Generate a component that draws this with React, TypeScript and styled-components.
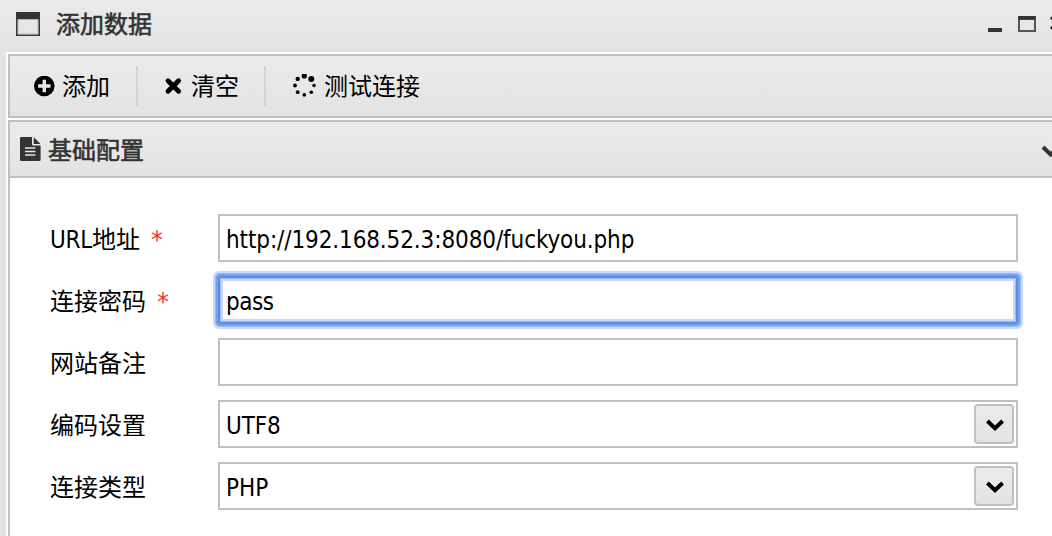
import React from 'react';
import styled, { createGlobalStyle, css } from 'styled-components';

const GlobalStyle = createGlobalStyle`
  * { box-sizing: border-box; }
  html, body { margin: 0; padding: 0; overflow: hidden; }
  body {
    background: #fff;
    color: #000;
    font: 24px "DejaVu Sans Condensed", "Noto Sans CJK SC", sans-serif;
  }
`;

const raised = css`
  background: linear-gradient(#ebebeb, #e3e3e3);
`;

const Window = styled.div`
  width: 1052px;
  height: 536px;
  overflow: hidden;
  display: flex;
  flex-direction: column;
  background: #e3e3e3;
`;

const TitleBar = styled.header`
  ${raised}
  flex: none;
  height: 52px;
  padding-left: 16px;
  display: flex;
  align-items: center;
  color: #333;
`;

const Title = styled.h1`
  margin: -6px 0 0 16px;
  font: 400 24px/36px "Noto Sans CJK SC", sans-serif;
  -webkit-text-stroke: 0.6px #333;
`;

const WindowIcon = styled.svg`
  display: block;
  width: 24px;
  height: 24px;
  margin-top: -4px;
`;

const WindowControls = styled.svg`
  display: block;
  width: 72px;
  height: 52px;
  margin-left: auto;
`;

const Body = styled.main`
  flex: 1;
  min-height: 0;
  margin-left: 6px;
  padding: 2px 0 0 2px;
  background: #fff;
  display: flex;
  flex-direction: column;
  gap: 2px;
`;

const Toolbar = styled.nav`
  ${raised}
  flex: none;
  height: 64px;
  border: 2px solid #c0c0c0;
  border-right: 0;
  display: flex;
  align-items: center;
`;

const ToolButton = styled.button<{ $width: number; $inset: number }>`
  width: ${p => p.$width}px;
  height: 40px;
  padding: 0 0 0 ${p => p.$inset}px;
  border: 0;
  background: none;
  display: flex;
  align-items: center;
  font: 24px/36px "Noto Sans CJK SC", sans-serif;
  color: #000;
  white-space: nowrap;

  & + & { border-left: 2px solid #c8d8dc; }
`;

const ToolText = styled.span`
  padding-bottom: 2px;
`;

const ToolIcon = styled.svg<{ $size: number; $gap: number }>`
  flex: none;
  width: ${p => p.$size}px;
  height: ${p => p.$size}px;
  margin-right: ${p => p.$gap}px;
`;

const Panel = styled.section`
  flex: 1;
  border: 2px solid #c0c0c0;
  border-width: 2px 0 0 2px;
`;

const PanelHeader = styled.header`
  ${raised}
  height: 56px;
  border-bottom: 2px solid #c0c0c0;
  padding-left: 10px;
  display: flex;
  align-items: center;
  color: #333;
`;

const PanelTitle = styled.h2`
  margin: 0 0 1px 7px;
  font: 400 24px/36px "Noto Sans CJK SC", sans-serif;
  -webkit-text-stroke: 0.6px #333;
`;

const FileIcon = styled.svg`
  width: 21px;
  height: 24px;
`;

const Collapse = styled.svg`
  width: 12px;
  height: 20px;
  margin: 6px 0 0 auto;
`;

const Form = styled.form`
  padding: 36px 34px 0 40px;
  display: flex;
  flex-direction: column;
  gap: 14px;
`;

const Row = styled.div`
  display: flex;
  height: 48px;
`;

const Label = styled.label`
  flex: none;
  width: 168px;
  line-height: 53px;
  white-space: pre;
`;

const Latin = styled.span<{ $spacing: number }>`
  letter-spacing: ${p => p.$spacing}px;
`;

const Required = styled.span`
  margin-left: 11px;
  color: #f0372b;
  font-family: "DejaVu Sans", sans-serif;
`;

const Field = styled.div<{ $focused?: boolean }>`
  flex: 1;
  border: 2px solid #c0c0c0;
  padding: 0 2px 0 6px;
  display: flex;
  align-items: center;
  justify-content: space-between;
  line-height: 46px;
  white-space: nowrap;

  ${p => p.$focused && css`
    border-color: #5f8cdf;
    border-radius: 2px;
    box-shadow: 0 0 0 2px #73a0f3, 0 0 0 3px #9bbcf3, 0 0 0 5px #c8d8f8,
      inset 0 0 0 1px #9bbcf3, inset 0 0 0 3px #c8d8f8;
  `}
`;

const FieldValue = styled(Latin)`
  padding-top: 4px;
`;

const DropButton = styled.button`
  ${raised}
  width: 40px;
  height: 40px;
  padding: 0 0 0 2px;
  border: 2px solid #c0c0c0;
  border-radius: 4px;
  display: grid;
  place-items: center;
`;

type RowData = {
  label: React.ReactNode;
  required?: boolean;
  value: string;
  spacing: number;
  focused?: boolean;
  select?: boolean;
};

const rows: RowData[] = [
  { label: <><Latin $spacing={-0.3}>URL</Latin>地址</>, required: true, value: 'http://192.168.52.3:8080/fuckyou.php', spacing: -0.11 },
  { label: '连接密码', required: true, value: 'pass', spacing: -0.5, focused: true },
  { label: '网站备注', value: '', spacing: 0 },
  { label: '编码设置', value: 'UTF8', spacing: -0.1, select: true },
  { label: '连接类型', value: 'PHP', spacing: 0, select: true },
];

const spinnerDots = [
  [12.3, 2.7, 2.6], [19.3, 5.7, 3], [22, 12.3, 1.8], [19.3, 19, 1.8],
  [12.3, 21.7, 1.8], [5.7, 19, 1.9], [3, 12.3, 1.9], [5.7, 5.7, 2.2],
];

export default function App() {
  return (
    <>
      <GlobalStyle />
      <Window>
        <TitleBar>
          <WindowIcon viewBox="0 0 24 24">
            <path fill="#333" fillRule="evenodd" d="M0 0h24v24H0zM1.6 7.2v15.2h20.8V7.2z" />
            <path fill="none" stroke="#aaa" strokeWidth=".8" d="M2 7.6h20v14.4H2z" />
          </WindowIcon>
          <Title>添加数据</Title>
          <WindowControls viewBox="980 0 72 52" fill="#333">
            <path d="M988 28h14v4h-14z" />
            <path fill="#555" fillRule="evenodd" d="M1018 16h18v16h-18zM1020 20v10h14V20z" />
            <path d="M1018.5 16h17v3.5h-17z" />
            <path d="M1051 17l12 12M1063 17l-12 12" fill="none" stroke="#333" strokeWidth="3.5" />
          </WindowControls>
        </TitleBar>
        <Body>
          <Toolbar>
            <ToolButton $width={126} $inset={24}>
              <ToolIcon $size={21} $gap={7} viewBox="0 0 21 21">
                <circle cx="10.3" cy="10" r="10.3" />
                <path d="M10.3 3.8v12.4M4.1 10h12.4" stroke="#e8e8e8" strokeWidth="3.4" />
              </ToolIcon>
              <ToolText>添加</ToolText>
            </ToolButton>
            <ToolButton $width={128} $inset={26}>
              <ToolIcon $size={18} $gap={9} viewBox="0 0 18 18">
                <path d="M4 3.7l10.6 10.6M14.6 3.7L4 14.3" stroke="#000" strokeWidth="4.8" strokeLinecap="round" />
              </ToolIcon>
              <ToolText>清空</ToolText>
            </ToolButton>
            <ToolButton $width={180} $inset={26}>
              <ToolIcon $size={24} $gap={8} viewBox="0 0 24 24">
                {spinnerDots.map(([x, y, r]) => <circle key={`${x}-${y}`} cx={x} cy={y - 0.8} r={r} />)}
              </ToolIcon>
              <ToolText>测试连接</ToolText>
            </ToolButton>
          </Toolbar>
          <Panel>
            <PanelHeader>
              <FileIcon viewBox="0 0 21 24">
                <path fill="#333" d="M1.3 0H12v7.3q0 1.3 1.3 1.3h7.3v14.1q0 1.3-1.3 1.3h-18Q0 24 0 22.7V1.3Q0 0 1.3 0zM13.7.4q.5.2.9.6l5 5q.4.4.6.9h-6.5z" />
                <path d="M5 11.1h10.4M5 14.6h10.4M5 18h10.4" stroke="#e6e6e6" strokeWidth="1.5" />
              </FileIcon>
              <PanelTitle>基础配置</PanelTitle>
              <Collapse viewBox="0 0 12 20">
                <path d="M3 5l7.5 7.5L18 5" fill="none" stroke="#333" strokeWidth="4" />
              </Collapse>
            </PanelHeader>
            <Form>
              {rows.map((row, i) => (
                <Row key={i}>
                  <Label>{row.label}{row.required && <Required>*</Required>}</Label>
                  <Field $focused={row.focused}>
                    <FieldValue $spacing={row.spacing}>{row.value}</FieldValue>
                    {row.select && (
                      <DropButton type="button">
                        <svg width="18" height="13" viewBox="0 0 18 13">
                          <path d="M1.4 3L9 10.2 16.6 3" fill="none" stroke="#000" strokeWidth="4" />
                        </svg>
                      </DropButton>
                    )}
                  </Field>
                </Row>
              ))}
            </Form>
          </Panel>
        </Body>
      </Window>
    </>
  );
}
